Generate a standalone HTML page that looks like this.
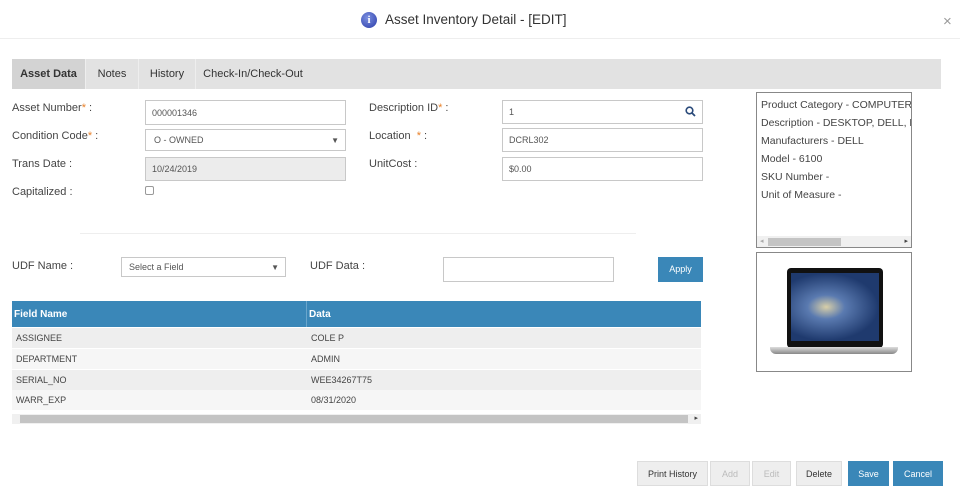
<!DOCTYPE html>
<html><head><style>
*{box-sizing:border-box;margin:0;padding:0}
body{width:960px;height:494px;background:#fff;font-family:"Liberation Sans",sans-serif;color:#444;position:relative;overflow:hidden;font-size:11px}
.a{position:absolute}
.lbl{position:absolute;font-size:11px;color:#444}
.req{color:#e8812a}
.in{position:absolute;border:1px solid #c8c8c8;background:#fff;font-size:9px;color:#555;padding-left:6px;display:flex;align-items:center}
.tab{position:absolute;top:59px;height:30px;line-height:30px;font-size:11px;color:#333;text-align:center}
.row{position:absolute;left:12px;width:689px;height:20px;font-size:9px;color:#444;line-height:20px}
.btn{position:absolute;top:461px;height:25px;line-height:25px;text-align:center;font-size:9px;border:1px solid #ddd;background:#eee;color:#333}
.blue{background:#3a87b8;color:#fff;border-color:#3a87b8}
</style></head><body>
<div class="a" style="left:361px;top:12px;width:16px;height:16px;border-radius:50%;background:radial-gradient(circle at 40% 35%,#7b8fe0,#2a3ca8);color:#fff;font:bold 11px 'Liberation Serif',serif;text-align:center;line-height:16px">i</div>
<div class="a" style="left:385px;top:12px;font-size:13.5px;color:#333">Asset Inventory Detail - [EDIT]</div>
<div class="a" style="left:943px;top:13px;font-size:15px;color:#999">×</div>
<div class="a" style="left:0;top:38px;width:960px;height:1px;background:#eee"></div>

<div class="a" style="left:12px;top:59px;width:929px;height:30px;background:#e2e2e2"></div>
<div class="tab" style="left:12px;width:73px;background:#d3d3d3;font-weight:bold">Asset Data</div>
<div class="tab" style="left:85px;width:53px;border-left:1px solid #eee">Notes</div>
<div class="tab" style="left:138px;width:57px;border-left:1px solid #eee">History</div>
<div class="tab" style="left:195px;width:115px;border-left:1px solid #eee">Check-In/Check-Out</div>

<div class="lbl" style="left:12px;top:102px">Asset Number<span class="req">*</span> :</div>
<div class="lbl" style="left:12px;top:130px">Condition Code<span class="req">*</span> :</div>
<div class="lbl" style="left:12px;top:158px">Trans Date :</div>
<div class="lbl" style="left:12px;top:186px">Capitalized :</div>
<div class="in" style="left:145px;top:100px;width:201px;height:25px">000001346</div>
<div class="in" style="left:145px;top:129px;width:201px;height:22px;padding-left:8px">O - OWNED<span style="position:absolute;right:6px;font-size:8px">▼</span></div>
<div class="in" style="left:145px;top:157px;width:201px;height:24px;background:#ececec">10/24/2019</div>
<div class="a" style="left:145px;top:186px;width:9px;height:9px;border:1px solid #999;border-radius:2px"></div>

<div class="lbl" style="left:369px;top:102px">Description ID<span class="req">*</span> :</div>
<div class="lbl" style="left:369px;top:130px">Location &nbsp;<span class="req">*</span> :</div>
<div class="lbl" style="left:369px;top:158px">UnitCost :</div>
<div class="in" style="left:502px;top:100px;width:201px;height:24px">1<svg style="position:absolute;right:6px;top:5px" width="11" height="11" viewBox="0 0 11 11"><circle cx="4.5" cy="4.5" r="3.3" fill="none" stroke="#2a4a7a" stroke-width="1.6"/><path d="M7 7L10 10" stroke="#2a4a7a" stroke-width="1.8"/></svg></div>
<div class="in" style="left:502px;top:128px;width:201px;height:24px">DCRL302</div>
<div class="in" style="left:502px;top:157px;width:201px;height:24px">$0.00</div>

<div class="a" style="left:756px;top:92px;width:156px;height:156px;border:1px solid #888;overflow:hidden;font-size:10.5px;color:#444;line-height:18px;padding:3px 0 0 4px;white-space:nowrap">Product Category - COMPUTER<br>Description - DESKTOP, DELL, DIMENSION<br>Manufacturers - DELL<br>Model - 6100<br>SKU Number -<br>Unit of Measure -
<div class="a" style="left:0;bottom:0;width:154px;height:11px;background:#f0f0f0"><div class="a" style="left:11px;top:2px;width:73px;height:8px;background:#c4c4c4"></div><div class="a" style="left:3px;top:0;font-size:7px;color:#aaa;line-height:11px">◂</div><div class="a" style="right:3px;top:0;font-size:7px;color:#444;line-height:11px">▸</div></div></div>
<div class="a" style="left:756px;top:252px;width:156px;height:120px;border:1px solid #888"></div>
<div class="a" style="left:787px;top:268px;width:96px;height:80px;background:#111;border-radius:4px"></div>
<div class="a" style="left:791px;top:273px;width:88px;height:68px;background:radial-gradient(ellipse at 40% 50%,#d8cfa8 0,#5a7ab0 25%,#1f3a6e 70%)"></div>
<div class="a" style="left:770px;top:347px;width:128px;height:7px;background:linear-gradient(#ddd,#888);border-radius:0 0 6px 6px"></div>

<div class="a" style="left:80px;top:233px;width:556px;height:1px;background:#eee"></div>
<div class="lbl" style="left:12px;top:260px">UDF Name :</div>
<div class="in" style="left:121px;top:257px;width:165px;height:20px;padding-left:7px">Select a Field<span style="position:absolute;right:6px;font-size:8px">▼</span></div>
<div class="lbl" style="left:310px;top:260px">UDF Data :</div>
<div class="in" style="left:443px;top:257px;width:171px;height:25px"></div>
<div class="a" style="left:658px;top:257px;width:45px;height:25px;line-height:25px;text-align:center;font-size:9px;color:#fff;background:#3a87b8">Apply</div>

<div class="a" style="left:12px;top:301px;width:689px;height:26px;background:#3a87b8;color:#fff;font-size:10px;font-weight:bold"><span class="a" style="left:2px;top:8px">Field Name</span><span class="a" style="left:294px;top:0;width:1px;height:26px;background:#6aa6cc"></span><span class="a" style="left:297px;top:8px">Data</span></div>
<div class="row" style="top:328px;background:#eee"><span style="padding-left:4px">ASSIGNEE</span><span class="a" style="left:299px">COLE P</span></div>
<div class="row" style="top:349px;background:#f6f6f6"><span style="padding-left:4px">DEPARTMENT</span><span class="a" style="left:299px">ADMIN</span></div>
<div class="row" style="top:370px;background:#eee"><span style="padding-left:4px">SERIAL_NO</span><span class="a" style="left:299px">WEE34267T75</span></div>
<div class="row" style="top:390px;background:#f6f6f6"><span style="padding-left:4px">WARR_EXP</span><span class="a" style="left:299px">08/31/2020</span></div>
<div class="a" style="left:12px;top:414px;width:689px;height:10px;background:#f0f0f0"><div class="a" style="left:8px;top:1px;width:668px;height:8px;background:#c4c4c4"></div><div class="a" style="right:3px;top:0;font-size:7px;line-height:10px">▸</div></div>

<div class="btn" style="left:637px;width:71px">Print History</div>
<div class="btn" style="left:710px;width:40px;color:#bbb">Add</div>
<div class="btn" style="left:752px;width:39px;color:#bbb">Edit</div>
<div class="btn" style="left:796px;width:46px">Delete</div>
<div class="btn blue" style="left:848px;width:41px">Save</div>
<div class="btn blue" style="left:893px;width:50px">Cancel</div>
</body></html>
